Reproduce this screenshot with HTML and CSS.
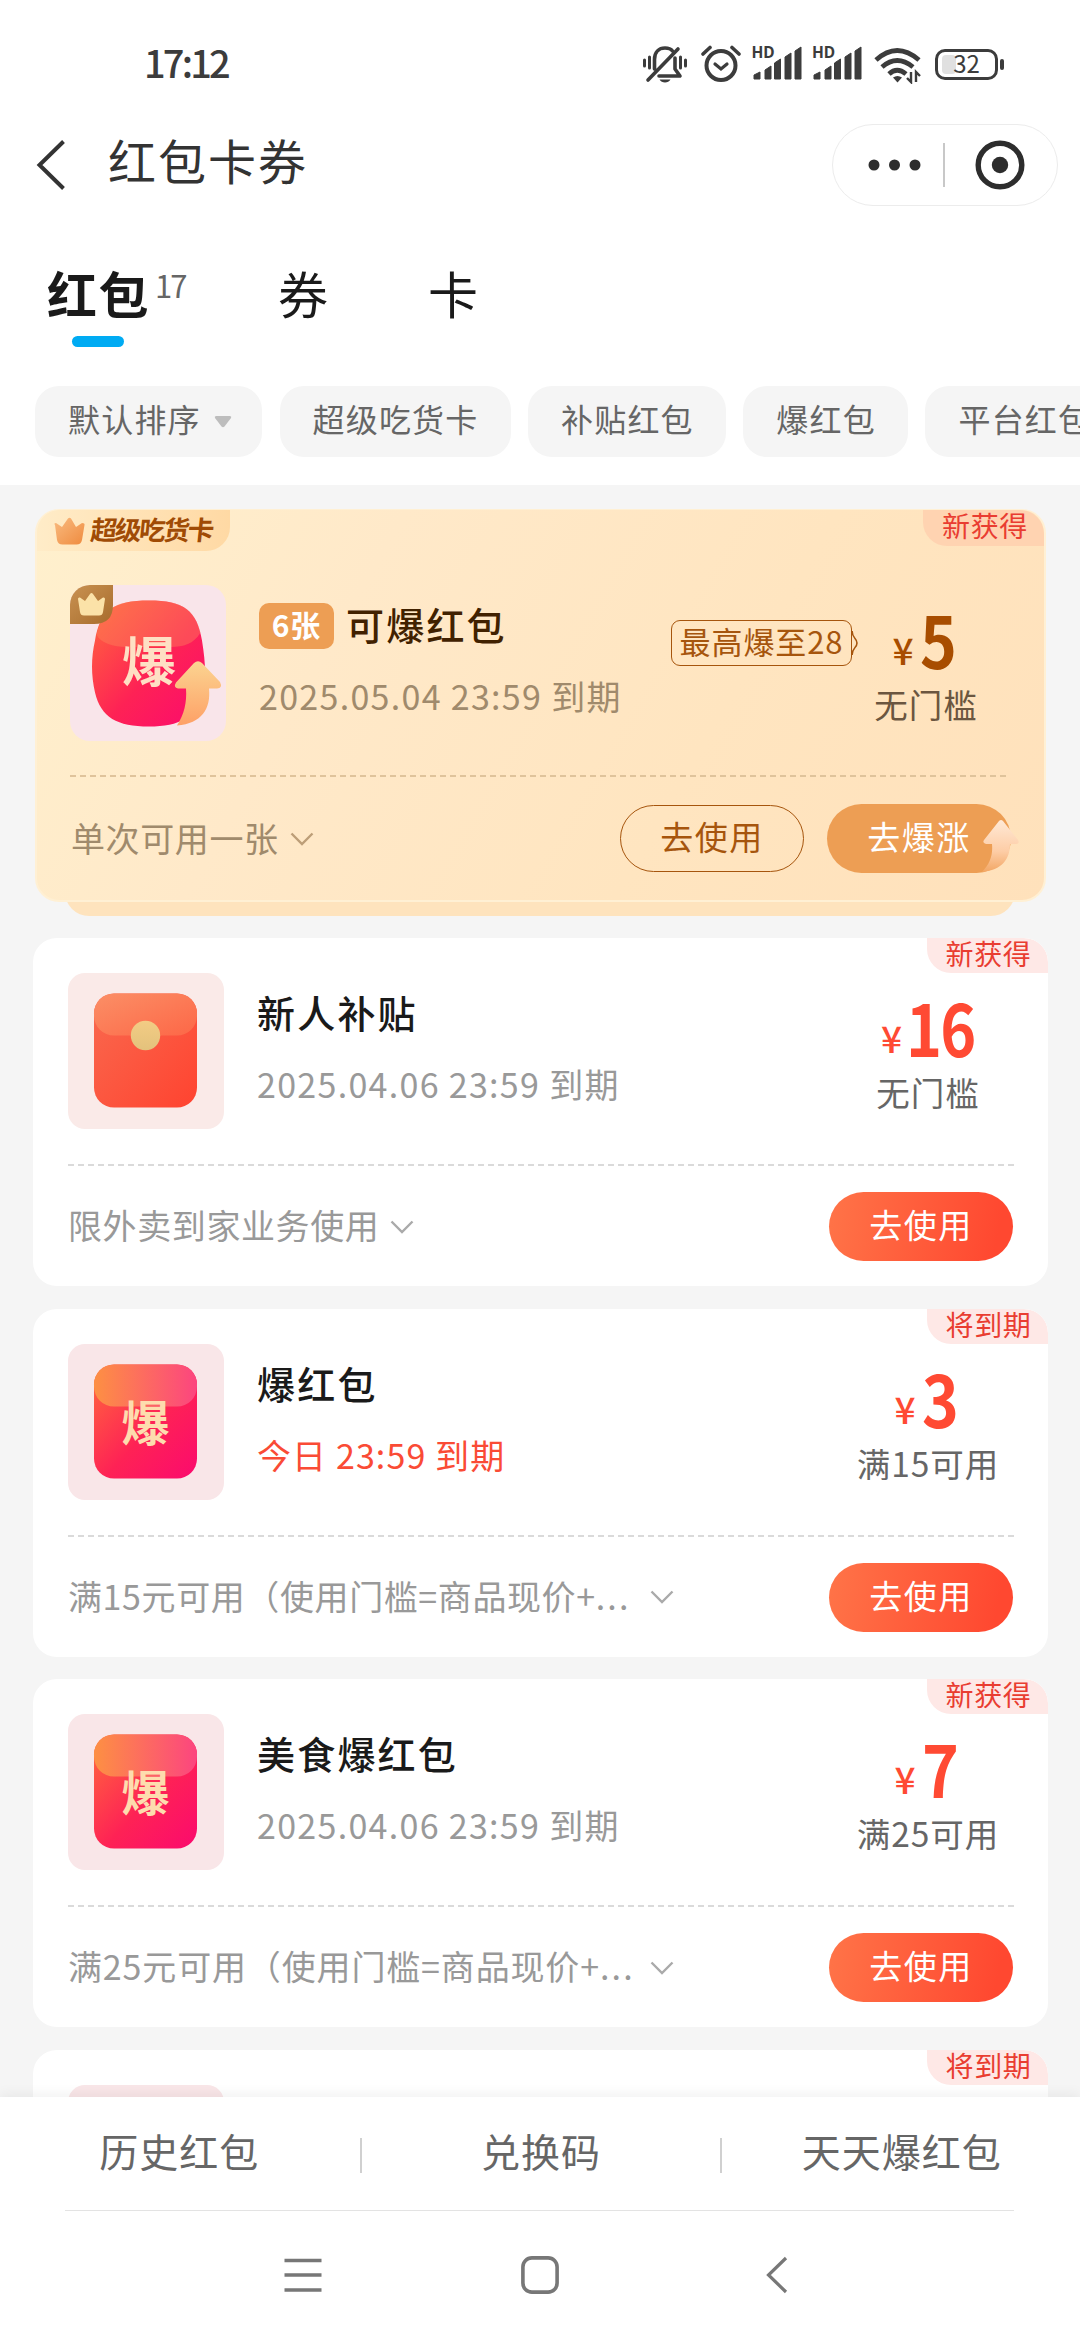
FILE: index.html
```html
<!DOCTYPE html>
<html lang="zh-CN">
<head>
<meta charset="utf-8">
<title>红包卡券</title>
<link rel="stylesheet" href="styles.css">
</head>
<body>
<svg width="0" height="0" class="defs" aria-hidden="true">
  <defs>
    <linearGradient id="gRed" x1="0" y1="0" x2="1" y2="1"><stop offset="0" stop-color="#f96a4f"/><stop offset="1" stop-color="#ff4330"/></linearGradient>
    <linearGradient id="gFlap" x1="0" y1="0" x2="1" y2="1"><stop offset="0" stop-color="#fb8f66"/><stop offset="1" stop-color="#fd6747"/></linearGradient>
    <linearGradient id="gPink" x1="0" y1="0" x2="1" y2="1"><stop offset="0" stop-color="#ff6a3c"/><stop offset=".55" stop-color="#fe2255"/><stop offset="1" stop-color="#fb0a6e"/></linearGradient>
    <linearGradient id="gPinkFlap" x1="0" y1="0" x2="1" y2="0"><stop offset="0" stop-color="#fd9043"/><stop offset="1" stop-color="#fc457f"/></linearGradient>
    <linearGradient id="gCoin" x1="0" y1="0" x2="0" y2="1"><stop offset="0" stop-color="#f3cc84"/><stop offset="1" stop-color="#e3c27c"/></linearGradient>
    <linearGradient id="gArrow" x1="0" y1="0" x2="0" y2="1"><stop offset="0" stop-color="#fbd491"/><stop offset="1" stop-color="#fea066"/></linearGradient>
    <linearGradient id="gArrow2" x1="0" y1="0" x2="0" y2="1"><stop offset="0" stop-color="#ffe9d6"/><stop offset=".6" stop-color="#fdcda6"/><stop offset="1" stop-color="#f3a765"/></linearGradient>
    <linearGradient id="gCrown" x1="0" y1="0" x2="1" y2="1"><stop offset="0" stop-color="#f9bb80"/><stop offset="1" stop-color="#ef8b3f"/></linearGradient>
    <linearGradient id="gBadge" x1="0" y1="0" x2="1" y2="1"><stop offset="0" stop-color="#c99252"/><stop offset="1" stop-color="#a76c2c"/></linearGradient>
  </defs>
  <symbol id="bars" viewBox="0 0 50 36">
    <path d="M2 29l6-3v7H2zM13 24l6-4v13h-6zM22.500 17l6-4v20h-6zM33 11l6-4v26h-6zM43 5l6-4v32h-6z" fill="#3c3c3c" stroke="#3c3c3c" stroke-width="1" stroke-linejoin="round"/>
  </symbol>
  <symbol id="burst" viewBox="0 0 156 156">
    <rect width="156" height="156" rx="17" fill="#f9e6e8"/>
    <rect x="26" y="20.500" width="103" height="114" rx="20" fill="url(#gPink)"/>
    <path d="M26 40.500a20 20 0 0 1 20-20h63a20 20 0 0 1 20 20v2a20 20 0 0 1-20 20H46a20 20 0 0 1-20-20z" fill="url(#gPinkFlap)"/>
  </symbol>
  <symbol id="chev" viewBox="0 0 24 14"><path d="M1.500 1.500L12 12 22.500 1.500" fill="none" stroke="currentColor" stroke-width="2.400"/></symbol>
</svg>

<header class="top">
  <div class="status">
    <span class="time">17:12</span>
    <div class="status-icons">
      <svg class="ic-bell" width="46" height="40" viewBox="0 0 46 40" fill="none" stroke="#3c3c3c" stroke-width="3.600">
        <path d="M12.500 25V15.500C12.500 8 17 4 23 4c3 0 6 1 7.500 3M33 14v11l5 7H17M6 36L36 5" stroke-linecap="round" stroke-linejoin="round"/>
        <path d="M2.500 16v6M7.500 13v11M38.500 13v11M43.500 16v6" stroke-width="3" stroke-linecap="round"/>
        <path d="M17.500 35.500h11c-2 4-9 4-11 0z" fill="#3c3c3c" stroke="none"/>
      </svg>
      <svg class="ic-alarm" width="40" height="38" viewBox="0 0 40 38" fill="none" stroke="#3c3c3c" stroke-linecap="round">
        <circle cx="20" cy="20.500" r="14.500" stroke-width="4"/>
        <path d="M14 19l6 5 6-5" stroke-width="3.200"/><path d="M2 9l7-6.500M38 9l-7-6.500" stroke-width="3.600"/>
      </svg>
      <div class="signal"><svg width="50" height="36"><use href="#bars"/></svg><span>HD</span></div>
      <div class="signal"><svg width="50" height="36"><use href="#bars"/></svg><span>HD</span></div>
      <svg class="ic-wifi" width="48" height="38" viewBox="0 0 48 38" fill="none" stroke="#3c3c3c" stroke-width="4.800">
        <path d="M2 14Q23-5 45 14M8 21Q23 8 39 21M15 28q8-7.500 17 0"/>
        <path d="M19 31.500q4.500-3 9 0l-4.500 5z" fill="#3c3c3c" stroke="none"/>
        <path d="M37 26v10l-4-4M42 36V26l4 4" stroke-width="2.400"/>
      </svg>
      <div class="battery"><span class="charge"></span><span class="level">32</span></div>
      <span class="tip"></span>
    </div>
  </div>
  <div class="bar">
    <svg class="back" width="30" height="50" viewBox="0 0 30 50"><path d="M27.500 1.500L3.500 25l24 23.500" fill="none" stroke="#333" stroke-width="4"/></svg>
    <h1>红包卡券</h1>
    <div class="capsule">
      <svg width="42" height="12" viewBox="0 0 42 12" fill="#2d2d2d"><circle cx="6" cy="6" r="5.500"/><circle cx="26.500" cy="6" r="5.500"/><circle cx="47" cy="6" r="5.500"/></svg>
      <i></i>
      <svg class="target" width="50" height="50" viewBox="0 0 50 50"><circle cx="25" cy="25" r="21.800" fill="none" stroke="#2d2d2d" stroke-width="5.400"/><circle cx="25" cy="25" r="8.200" fill="#2d2d2d"/></svg>
    </div>
  </div>
  <nav class="tabs">
    <div class="tab active"><span>红包</span><sup>17</sup></div>
    <div class="tab"><span>券</span></div>
    <div class="tab"><span>卡</span></div>
  </nav>
  <div class="chips">
    <span class="chip sort">默认排序<svg width="18" height="13" viewBox="0 0 18 13"><path d="M2 1h14q2 .5 1 2l-6.500 8.500q-1.500 1.500-3 0L1 3Q0 1.500 2 1z" fill="#bdbdbd"/></svg></span>
    <span class="chip">超级吃货卡</span>
    <span class="chip">补贴红包</span>
    <span class="chip">爆红包</span>
    <span class="chip">平台红包</span>
  </div>
</header>

<main class="list">
  <div class="stack">
    <article class="card gold">
      <div class="brand">
        <svg width="32" height="28" viewBox="0 0 32 28"><path d="M2 8q-1.500-2 1-2l6 4L15 1.500q1.500-1.500 3 0L23 10l6-4q3 0 2.500 2l-2.500 15q-1 4.500-5.500 4.500h-14Q5 27.500 4 23z" fill="url(#gCrown)"/></svg>
        <span>超级吃货卡</span>
      </div>
      <span class="flag">新获得</span>
      <div class="main">
        <svg class="pic" width="156" height="156" viewBox="0 0 156 156">
          <rect width="156" height="156" rx="20" fill="#f9e5ea"/>
          <path d="M79 15.500c35 0 48 10 53 40 4 25 4 40 0 52-6 25-22 34-53 34-32 0-48-9-54-34-4-17-4-35 0-52 5-30 18-40 54-40z" fill="url(#gPink)"/>
          <path d="M79 15.500c32 0 45 8 51.500 32C124 59 113 62 101 62H57C43 62 31 58 26.500 50 32 24 45 15.500 79 15.500z" fill="#fd8a5d" fill-opacity=".4"/>
          <text x="79" y="97" class="burst-char big">爆</text>
          <path d="M124 78q4-3.500 8 0l18 19q3 6-3 6.500h-8c2 20-7 35-32 37 7-11 10-23 9-37h-8q-5-1-2-6z" fill="url(#gArrow)"/>
          <path d="M0 20A20 20 0 0 1 20 0H43V20Q43 39 24 39H0z" fill="url(#gBadge)"/>
          <path d="M8 14q0-2 2-1.500l5 3.500 5-7q1.500-2 3 0l5 7 5-3.500q2-.5 2 1.500l-2 13q-.5 3.500-4 3.500H14q-3.500 0-4-3.500z" fill="#fbe2a8"/>
        </svg>
        <div class="info"><h2><b class="count">6张</b>可爆红包</h2><p>2025.05.04 23:59 到期</p></div>
        <div class="boost">最高爆至28<svg width="8" height="24" viewBox="0 0 8 24"><path d="M1.200 0Q1 4 4 7.500q4 4.500 0 9Q1 20 1.200 24" fill="#fee4bf" stroke="#a6550d" stroke-width="1.500"/></svg></div>
        <div class="price"><strong><small>¥</small><span>5</span></strong><em>无门槛</em></div>
      </div>
      <div class="foot">
        <span class="note">单次可用一张</span><svg class="chev" width="24" height="14"><use href="#chev"/></svg>
        <a class="btn line">去使用</a>
        <a class="btn boom">去爆涨<svg width="38" height="54" viewBox="0 0 38 54"><path d="M17 2q2-2 4 0l15 19q2 4-2 4h-6c0 15-8 26-28 28 8-8 11-17 10-28H4q-4-1-2-4z" fill="url(#gArrow2)"/></svg></a>
      </div>
    </article>
  </div>

  <article class="card">
    <span class="flag">新获得</span>
    <div class="main">
      <svg class="pic" width="156" height="156" viewBox="0 0 156 156">
        <rect width="156" height="156" rx="17" fill="#faeae8"/>
        <rect x="26" y="20.500" width="103" height="114" rx="20" fill="url(#gRed)"/>
        <path d="M26 40.500a20 20 0 0 1 20-20h63a20 20 0 0 1 20 20v2a20 20 0 0 1-20 20H46a20 20 0 0 1-20-20z" fill="url(#gFlap)"/>
        <circle cx="77.500" cy="62.500" r="14.700" fill="url(#gCoin)"/>
      </svg>
      <div class="info"><h2>新人补贴</h2><p>2025.04.06 23:59 到期</p></div>
      <div class="price two"><strong><small>¥</small><span>16</span></strong><em>无门槛</em></div>
    </div>
    <div class="foot">
      <span class="note">限外卖到家业务使用</span><svg class="chev" width="24" height="14"><use href="#chev"/></svg>
      <a class="btn">去使用</a>
    </div>
  </article>

  <article class="card">
    <span class="flag">将到期</span>
    <div class="main">
      <svg class="pic" width="156" height="156" viewBox="0 0 156 156"><use href="#burst" width="156" height="156"/><text x="77.500" y="97" class="burst-char">爆</text></svg>
      <div class="info"><h2>爆红包</h2><p class="urgent">今日 23:59 到期</p></div>
      <div class="price"><strong><small>¥</small><span>3</span></strong><em>满15可用</em></div>
    </div>
    <div class="foot">
      <span class="note long">满15元可用（使用门槛=商品现价+<span class="dots">...</span></span><svg class="chev" width="24" height="14"><use href="#chev"/></svg>
      <a class="btn">去使用</a>
    </div>
  </article>

  <article class="card">
    <span class="flag">新获得</span>
    <div class="main">
      <svg class="pic" width="156" height="156" viewBox="0 0 156 156"><use href="#burst" width="156" height="156"/><text x="77.500" y="97" class="burst-char">爆</text></svg>
      <div class="info"><h2>美食爆红包</h2><p>2025.04.06 23:59 到期</p></div>
      <div class="price"><strong><small>¥</small><span>7</span></strong><em>满25可用</em></div>
    </div>
    <div class="foot">
      <span class="note long wide">满25元可用（使用门槛=商品现价+<span class="dots">...</span></span><svg class="chev" width="24" height="14"><use href="#chev"/></svg>
      <a class="btn">去使用</a>
    </div>
  </article>

  <article class="card">
    <span class="flag">将到期</span>
    <div class="main">
      <svg class="pic" width="156" height="156"><use href="#burst" width="156" height="156"/></svg>
    </div>
  </article>
</main>

<footer class="bottom">
  <div class="links"><a>历史红包</a><a>兑换码</a><a>天天爆红包</a></div>
  <div class="sysnav">
    <svg width="38" height="38" viewBox="0 0 38 38" stroke="#777" stroke-width="3.400"><path d="M.5 4.500h37M.5 19h37M.5 34h37"/></svg>
    <svg width="38" height="38" viewBox="0 0 38 38"><rect x="1.900" y="1.900" width="34.200" height="34.200" rx="9" fill="none" stroke="#777" stroke-width="3.600"/></svg>
    <svg width="38" height="38" viewBox="0 0 38 38"><path d="M28 2L10.500 19 28 36" fill="none" stroke="#777" stroke-width="3.200"/></svg>
  </div>
</footer>
</body>
</html>
```

FILE: styles.css
```css
* { box-sizing: border-box; margin: 0; padding: 0; }
html, body { width: 1080px; height: 2340px; overflow: hidden; }
body {
  display: flex; flex-direction: column;
  background: #f5f5f5; color: #1a1a1a;
  font-family: "Noto Sans CJK SC", "Noto Sans", sans-serif;
}
svg { display: block; flex: none; }
.defs { position: absolute; }
.burst-char { font-size: 48px; font-weight: 700; text-anchor: middle; fill: #fddcae; }
.burst-char.big { font-size: 54px; fill: #fee0c4; }

/* header */
.top { flex: none; height: 485px; background: #fff; }
.status { height: 124px; padding: 4px 76px 0 144px; display: flex; align-items: center; justify-content: space-between; }
.time { font-size: 38px; font-weight: 500; line-height: 50px; color: #3c3c3c; margin-top: -5px; letter-spacing: -2.800px; }
.status-icons { display: flex; align-items: center; }
.ic-alarm { margin-left: 13px; }
.signal { position: relative; margin-left: 10.500px; }
.signal span { position: absolute; left: 0; top: -4px; font: 700 15.500px/20px "Noto Sans", sans-serif; color: #3c3c3c; }
.ic-wifi { margin: 2px 0 0 12px; }
.battery { display: flex; align-items: center; justify-content: center; width: 63px; height: 31px; margin-left: 13px; border: 3px solid #3c3c3c; border-radius: 10px; position: relative; }
.charge { position: absolute; left: 4px; top: 3px; width: 14px; height: 19px; background: #e0e0e0; border-radius: 4px; }
.level { position: relative; font-size: 24px; line-height: 24px; margin-top: -3px; color: #3c3c3c; }
.tip { width: 4px; height: 11px; margin-left: 2px; border-radius: 2px; background: #3c3c3c; }

.bar { height: 82px; padding: 0 22px 0 36px; display: flex; align-items: center; }
.bar h1 { margin: -13px auto 0 42px; font-size: 48px; line-height: 60px; font-weight: 400; letter-spacing: 2px; color: #333; }
.capsule { width: 226px; height: 82px; border: 1.5px solid #ececec; border-radius: 41px; display: flex; align-items: center; padding-left: 35px; }
.capsule svg { overflow: visible; }
.capsule i { width: 1.5px; height: 44px; margin-left: 33px; background: #c8c8c8; }
.capsule .target { margin-left: 30px; }

.tabs { height: 180px; padding: 56px 0 0 47px; display: flex; line-height: 60px; font-size: 50px; }
.tab { width: 150px; }
.tab.active { width: 231px; display: grid; grid-template-columns: auto 1fr; align-content: start; font-weight: 700; letter-spacing: 1.500px; }
.tab sup { font-size: 31px; font-weight: 400; line-height: 45px; color: #666; letter-spacing: -2px; padding-left: 5px; vertical-align: top; }
.tab.active::after { content: ""; width: 52px; height: 11px; margin: 14px 0 0 25px; border-radius: 6px; background: #00abf3; }

.chips { display: flex; gap: 17.500px; padding-left: 35px; overflow: hidden; }
.chip { flex: none; height: 71px; padding: 0 32px 0 33px; border-radius: 24px; background: #f5f5f5; color: #666; font-size: 32px; line-height: 64px; letter-spacing: 1.200px; white-space: nowrap; }
.chip.sort { display: flex; align-items: flex-start; width: 227px; }
.chip.sort svg { margin: 29px 0 0 13px; }

/* coupon list */
.list { flex: 1; min-height: 0; overflow: hidden; padding: 24px 32px 0 33px; display: flex; flex-direction: column; gap: 22.300px; }
.card { flex: none; height: 348.200px; position: relative; overflow: hidden; background: #fff; border-radius: 24px; }
.stack { flex: none; position: relative; height: 407px; padding: 0 2px; }
.stack::before { content: ""; position: absolute; left: 32px; right: 33px; bottom: 0; height: 60px; border-radius: 24px; background: #fee3bd; }
.card.gold { height: 393px; border: 2px solid #fff0d4; border-top-width: 1px; background: linear-gradient(120deg, #fff0cd 0%, #ffe9c9 30%, #ffe5c0 65%, #ffe1bb 100%); }

.main { display: flex; height: 227px; padding: 35px 33px 0 35px; }
.info { flex: 1; padding: 14px 0 0 33px; white-space: nowrap; }
.info h2 { font-size: 38px; font-weight: 500; line-height: 50px; letter-spacing: 2.200px; }
.info p { margin-top: 25px; font-size: 34px; line-height: 44px; letter-spacing: 1.300px; color: #999; }
.info .urgent { color: #fa4b35; letter-spacing: 1.100px; }
.price { width: 176px; padding-top: 23px; display: flex; flex-direction: column; align-items: center; color: #ff4a33; }
.price strong { display: flex; align-items: baseline; gap: 6px; height: 60px; font-size: 71px; line-height: 60px; }
.price strong span { transform: scaleX(.88); transform-origin: 0 50%; margin-right: -4px; }
.price small { position: relative; top: -4px; font-size: 37px; font-weight: 500; line-height: 40px; }
.price.two strong { gap: 4px; }
.price.two strong span { transform: scaleX(.86); letter-spacing: -2px; margin-right: -13px; }
.price em { margin-top: 14px; font-style: normal; font-size: 33.500px; line-height: 44px; letter-spacing: 1px; color: #666; position: relative; left: 1px; }
.foot { display: flex; align-items: center; height: 121px; padding: 2px 35px 0; position: relative; }
.foot::before { content: ""; position: absolute; left: 35px; right: 33px; top: -1px; height: 2px; background: repeating-linear-gradient(90deg, #dadada 0 6px, transparent 6px 10px); }
.note { font-size: 34px; line-height: 44px; letter-spacing: .600px; color: #999; margin-top: -3px; white-space: nowrap; }
.note.long { width: 570px; margin-right: 1px; }
.note.wide { letter-spacing: .850px; }
.note .dots { letter-spacing: 2.200px; }
.chev { margin-left: 11px; color: #aaa; }
.btn { flex: none; width: 184px; height: 69px; margin-left: auto; border-radius: 35px; background: linear-gradient(100deg, #ff7448, #ff4830 90%); color: #fff; font-size: 33px; font-weight: 400; line-height: 64px; letter-spacing: 1.500px; text-align: center; }
.flag { position: absolute; right: 0; top: 0; z-index: 1; width: 121px; height: 35px; padding-left: 2px; border-radius: 0 24px 0 24px; background: #fee8e6; color: #e93d31; font-size: 28px; line-height: 30px; letter-spacing: .700px; text-align: center; }

/* member card */
.gold .flag { background: #ffd3b1; height: 36px; line-height: 31px; padding: 0 0 0 3px; }
.gold .brand { position: absolute; left: -1px; top: 0; width: 194px; height: 41px; padding: 1px 0 0 17px; display: flex; align-items: center; gap: 6px; border-radius: 22px 0 24px 0; background: linear-gradient(90deg, #ffecc8, #ffd9a4); }
.brand span { font-size: 26.500px; font-weight: 700; line-height: 36px; letter-spacing: -2.300px; color: #a04b05; transform: skewX(-6deg); margin-top: -5px; white-space: nowrap; }
.gold .main { height: 266px; padding: 75px 33px 0 33px; }
.gold .info h2 { display: flex; align-items: center; color: #412100; }
.count { width: 75px; height: 46px; margin-right: 12px; border-radius: 10px; background: #ed9e54; color: #fff; font-size: 30px; line-height: 42px; letter-spacing: 1px; text-align: center; position: relative; top: 2px; }
.gold .info p, .gold .note { color: #a08a6c; }
.gold .note { margin-top: 0; padding-left: 1px; }
.gold .chev { color: #bd9e78; margin-top: 2px; }
.boost { position: relative; width: 181px; height: 46px; margin: 35px 6px 0 0; border: 1.500px solid #a6550d; border-radius: 9px; color: #a6550d; font-size: 31px; line-height: 39px; letter-spacing: .900px; text-align: center; white-space: nowrap; }
.boost svg { position: absolute; right: -8px; top: 10px; }
.gold .price { width: 134px; margin-right: 19px; color: #a84d00; }
.gold .price em { color: #6b5640; }
.gold .foot { height: 124px; padding: 0 33px; }
.gold .foot::before { left: 33px; right: 35px; background: repeating-linear-gradient(90deg, #dfc39b 0 6px, transparent 6px 10px); }
.btn.line { height: 67px; border: 1.500px solid #a6550d; background: none; color: #a6550d; line-height: 61px; }
.btn.boom { position: relative; margin-left: 23px; background: #ed9e54; }
.boom svg { position: absolute; right: -9px; bottom: 0; }

/* bottom bar */
.bottom { flex: none; position: relative; z-index: 2; height: 243px; background: #fff; box-shadow: 0 -3px 12px rgba(0, 0, 0, .06); }
.links { display: grid; grid-template-columns: repeat(3, 1fr); height: 114px; margin: 0 -1px; align-items: center; position: relative; }
.links::after { content: ""; position: absolute; left: 66px; right: 67px; bottom: 0; height: 1.500px; background: #e3e3e3; }
.links a { height: 35px; line-height: 25px; text-align: center; font-size: 39px; letter-spacing: 1px; color: #666; margin-top: 2px; white-space: nowrap; }
.links a + a { border-left: 2px solid #d0d0d0; }
.sysnav { display: flex; justify-content: center; gap: 199px; padding-top: 45px; }
```
